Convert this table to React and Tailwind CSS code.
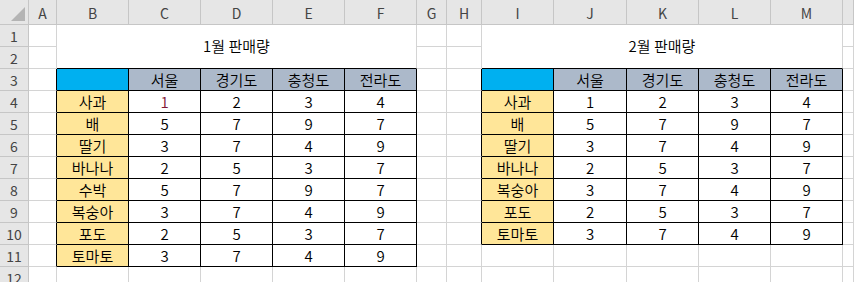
const colNames = ['', 'A', 'B', 'C', 'D', 'E', 'F', 'G', 'H', 'I', 'J', 'K', 'L', 'M', ''];

const headers = ['서울', '경기도', '충청도', '전라도'];

const janSales = [
  ['사과', 1, 2, 3, 4],
  ['배', 5, 7, 9, 7],
  ['딸기', 3, 7, 4, 9],
  ['바나나', 2, 5, 3, 7],
  ['수박', 5, 7, 9, 7],
  ['복숭아', 3, 7, 4, 9],
  ['포도', 2, 5, 3, 7],
  ['토마토', 3, 7, 4, 9],
];

const febSales = [
  ['사과', 1, 2, 3, 4],
  ['배', 5, 7, 9, 7],
  ['딸기', 3, 7, 4, 9],
  ['바나나', 2, 5, 3, 7],
  ['복숭아', 3, 7, 4, 9],
  ['포도', 2, 5, 3, 7],
  ['토마토', 3, 7, 4, 9],
];

// tables: B3:F11 and I3:M10
const tables = [
  { c0: 2, c1: 6, r0: 3, r1: 11, data: janSales, title: '1월 판매량' },
  { c0: 9, c1: 13, r0: 3, r1: 10, data: febSales, title: '2월 판매량' },
];

const inTable = (r, c) => tables.some(t => r >= t.r0 && r <= t.r1 && c >= t.c0 && c <= t.c1);

const Corner = () => (
  <div className="relative bg-[#e6e6e6] border-r border-b border-[#c6c6c6]">
    <svg className="absolute left-0 top-0" width="29" height="25" viewBox="0 0 29 25">
      <polygon points="25,7 25,21 11,21" fill="#b4b4b4" />
    </svg>
  </div>
);

const ColHeader = ({ name }) => (
  <div className="flex items-center justify-center bg-[#e6e6e6] border-r border-b border-[#c6c6c6] text-[14px] text-[#444] pt-[2px]">
    {name}
  </div>
);

const RowHeader = ({ n }) => (
  <div className="flex items-center justify-center bg-[#e6e6e6] border-r border-b border-[#c6c6c6] text-[14px] text-[#444] pt-[1px]">
    {n}
  </div>
);

const Cell = ({ r, c }) => {
  const t = tables.find(t => r >= t.r0 && r <= t.r1 && c >= t.c0 && c <= t.c1);
  const blackRight = inTable(r, c) || inTable(r, c + 1);
  const blackBottom = inTable(r, c) || inTable(r + 1, c);

  let bg = 'bg-white';
  let text = null;
  let red = false;
  if (t) {
    const ri = r - t.r0;
    const ci = c - t.c0;
    if (ri === 0 && ci === 0) bg = 'bg-[#00b0f0]';
    else if (ri === 0) {
      bg = 'bg-[#acb9ca]';
      text = headers[ci - 1];
    } else if (ci === 0) {
      bg = 'bg-[#ffe699]';
      text = t.data[ri - 1][0];
    } else {
      text = t.data[ri - 1][ci];
      red = t.c0 === 2 && ri === 1 && ci === 1;
    }
  }

  return (
    <div
      className={`flex items-center justify-center text-[15px] font-[350] pt-[1px] ${bg} ${
        blackRight ? 'border-r border-r-black' : 'border-r border-r-[#d4d4d4]'
      } ${blackBottom ? 'border-b border-b-black' : 'border-b border-b-[#d4d4d4]'} ${
        red ? 'text-[#7f1734]' : 'text-black'
      }`}
    >
      {text}
    </div>
  );
};

const Title = ({ label }) => (
  <div className="col-span-5 row-span-2 flex items-center justify-center bg-white border-r border-r-[#d4d4d4] border-b border-b-black text-[15px] font-[350] text-black">
    {label}
  </div>
);

export default function App() {
  const rows = [];
  for (let r = 1; r <= 12; r++) {
    rows.push(<RowHeader key={`rh${r}`} n={r} />);
    for (let c = 1; c <= 14; c++) {
      if (r === 1 && c === 2) {
        rows.push(<Title key="t1" label={tables[0].title} />);
        c = 6;
        continue;
      }
      if (r === 1 && c === 9) {
        rows.push(<Title key="t2" label={tables[1].title} />);
        c = 13;
        continue;
      }
      if (r === 2 && ((c >= 2 && c <= 6) || (c >= 9 && c <= 13))) continue;
      rows.push(<Cell key={`${r}-${c}`} r={r} c={c} />);
    }
  }

  return (
    <div
      className="w-[854px] h-[282px] overflow-hidden bg-white"
      style={{ fontFamily: '"Noto Sans CJK KR", "Noto Sans", sans-serif' }}
    >
      <div className="grid grid-cols-[29px_28px_72px_72px_72px_72px_72px_30px_35px_72px_73px_72px_72px_72px_1fr] grid-rows-[25px_repeat(12,22px)]">
        <Corner />
        {colNames.slice(1).map((n, i) => (
          <ColHeader key={`ch${i}`} name={n} />
        ))}
        {rows}
      </div>
    </div>
  );
}
